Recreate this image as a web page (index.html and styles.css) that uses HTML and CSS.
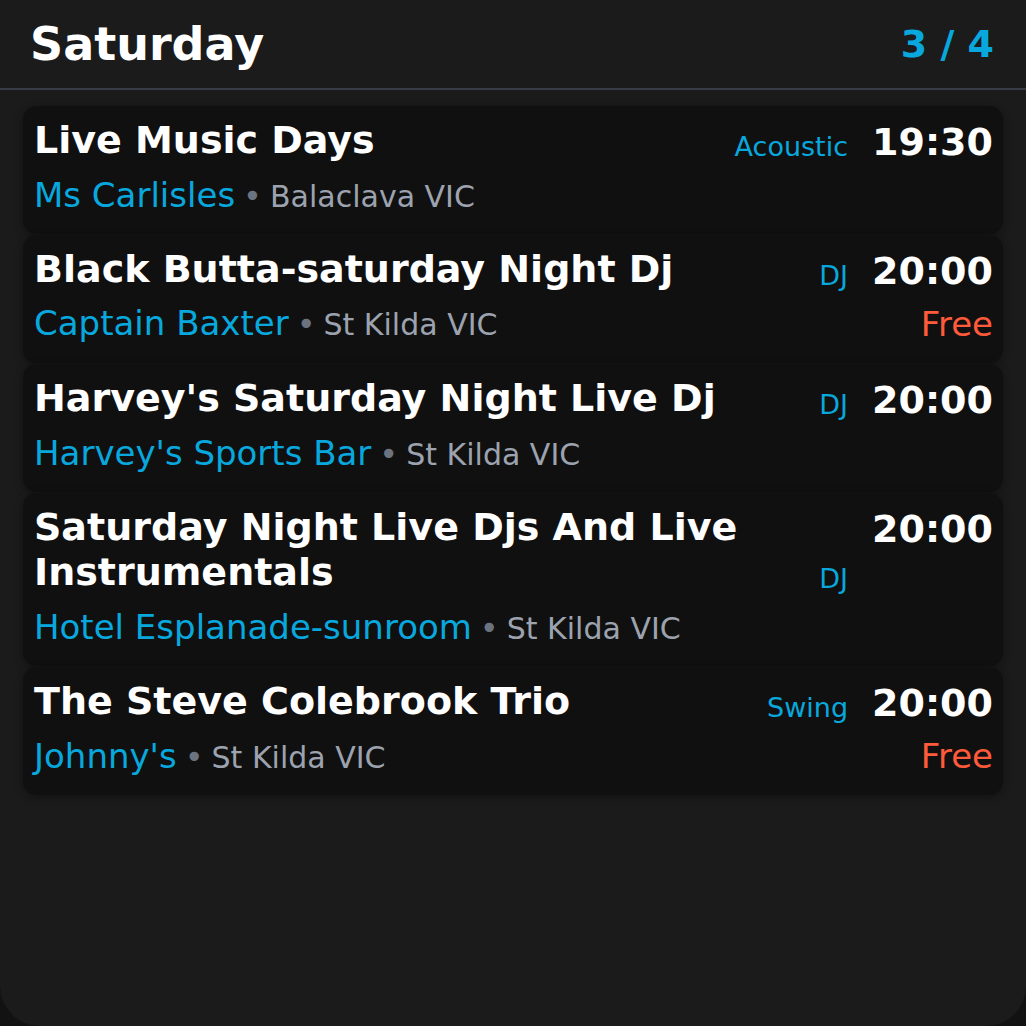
FILE: index.html
```html
<!DOCTYPE html>
<html lang="en">
<head>
<meta charset="utf-8">
<title>Saturday</title>
<link rel="stylesheet" href="styles.css">
</head>
<body>
<div class="screen">
  <header class="header">
    <h1 class="day">Saturday</h1>
    <div class="counter">3 / 4</div>
  </header>
  <main class="list">
    <article class="card">
      <div class="main">
        <div class="head">
          <div class="title">Live Music Days</div>
          <div class="tag">Acoustic</div>
        </div>
        <div class="sub"><span class="venue">Ms Carlisles</span><span class="dot">•</span><span class="place">Balaclava VIC</span></div>
      </div>
      <div class="side">
        <div class="time">19:30</div>
      </div>
    </article>
    <article class="card">
      <div class="main">
        <div class="head">
          <div class="title">Black Butta-saturday Night Dj</div>
          <div class="tag">DJ</div>
        </div>
        <div class="sub"><span class="venue">Captain Baxter</span><span class="dot">•</span><span class="place">St Kilda VIC</span></div>
      </div>
      <div class="side">
        <div class="time">20:00</div>
        <div class="free">Free</div>
      </div>
    </article>
    <article class="card">
      <div class="main">
        <div class="head">
          <div class="title">Harvey's Saturday Night Live Dj</div>
          <div class="tag">DJ</div>
        </div>
        <div class="sub"><span class="venue">Harvey's Sports Bar</span><span class="dot">•</span><span class="place">St Kilda VIC</span></div>
      </div>
      <div class="side">
        <div class="time">20:00</div>
      </div>
    </article>
    <article class="card">
      <div class="main">
        <div class="head">
          <div class="title">Saturday Night Live Djs And Live Instrumentals</div>
          <div class="tag">DJ</div>
        </div>
        <div class="sub"><span class="venue">Hotel Esplanade-sunroom</span><span class="dot">•</span><span class="place">St Kilda VIC</span></div>
      </div>
      <div class="side">
        <div class="time">20:00</div>
      </div>
    </article>
    <article class="card">
      <div class="main">
        <div class="head">
          <div class="title">The Steve Colebrook Trio</div>
          <div class="tag">Swing</div>
        </div>
        <div class="sub"><span class="venue">Johnny's</span><span class="dot">•</span><span class="place">St Kilda VIC</span></div>
      </div>
      <div class="side">
        <div class="time">20:00</div>
        <div class="free">Free</div>
      </div>
    </article>
  </main>
</div>
</body>
</html>
```
FILE: styles.css
```css
* { box-sizing: border-box; }
html, body {
  margin: 0;
  padding: 0;
  background: #121212;
}
body {
  font-family: "DejaVu Sans", "Liberation Sans", sans-serif;
  color: #ffffff;
}
.screen {
  width: 1026px;
  height: 1026px;
  background: #1b1b1b;
  border-radius: 0 0 40px 40px;
  overflow: hidden;
  display: flex;
  flex-direction: column;
}
.header {
  display: flex;
  align-items: center;
  justify-content: space-between;
  padding: 17px 32px 16px 30px;
  border-bottom: 2px solid #373c47;
}
.day {
  margin: 0;
  font-size: 46px;
  font-weight: 700;
  line-height: 1.2;
}
.counter {
  font-size: 38px;
  font-weight: 700;
  line-height: 1.2;
  color: #08a8de;
}
.list {
  display: flex;
  flex-direction: column;
  gap: 1px;
  padding: 16px 23px 0 23px;
}
.card {
  display: flex;
  gap: 24px;
  background: #101010;
  border-radius: 14px;
  padding: 12px 10px 13px 11px;
  box-shadow: 0 2px 8px rgba(0, 0, 0, 0.35);
}
.main {
  flex: 1;
  min-width: 0;
}
.head {
  display: flex;
  align-items: flex-end;
  gap: 24px;
}
.title {
  flex: 1;
  min-width: 0;
  font-size: 38px;
  font-weight: 700;
  line-height: 1.2;
}
.tag {
  font-size: 27px;
  line-height: 1.25;
  color: #08a8de;
  white-space: nowrap;
}
.sub {
  margin-top: 6px;
  font-size: 34px;
  line-height: 1.5;
  white-space: nowrap;
}
.venue { color: #08a8de; }
.dot {
  color: #6b7280;
  font-size: 32px;
  margin: 0 8px 0 8px;
}
.place {
  color: #9ca3af;
  font-size: 30px;
}
.side {
  display: flex;
  flex-direction: column;
  align-items: flex-end;
}
.time {
  font-size: 38px;
  font-weight: 700;
  line-height: 1.3;
  white-space: nowrap;
}
.free {
  margin-top: 3px;
  font-size: 34px;
  line-height: 1.5;
  color: #ff5a3a;
}
```
